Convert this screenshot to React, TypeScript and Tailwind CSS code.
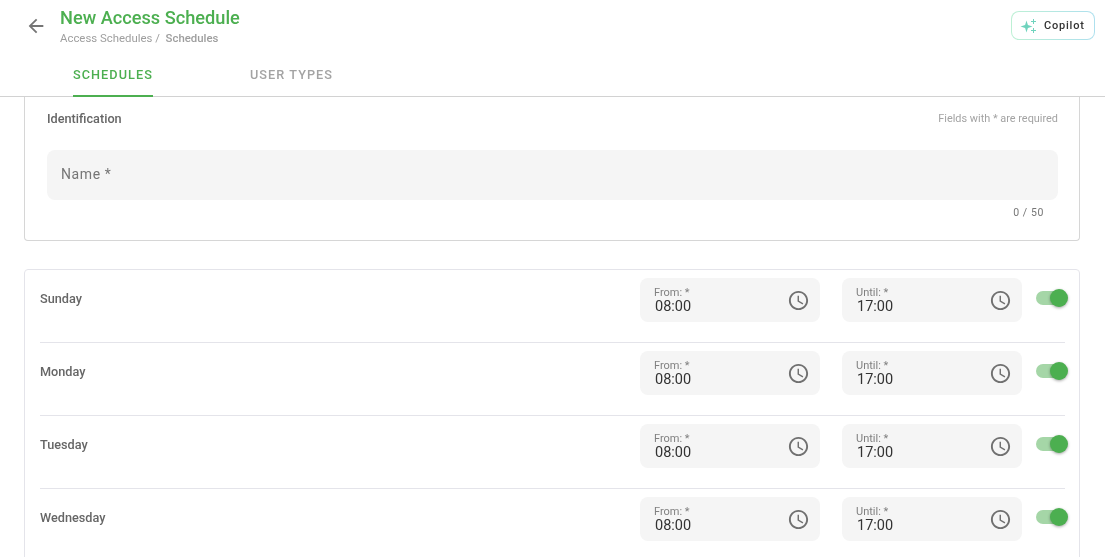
import React from 'react'
import { MdArrowBack, MdOutlineAccessTime } from 'react-icons/md'

const days = ['Sunday', 'Monday', 'Tuesday', 'Wednesday']

function TimeField({ label, value }: { label: string; value: string }) {
  return (
    <div className="flex h-[44px] w-[180px] items-center justify-between rounded-lg bg-[#f5f5f5] pl-[14px] pr-[10px]">
      <div className="flex flex-col pt-[1px]">
        <span className="text-[11px] leading-[12px] text-[#808080]">{label}</span>
        <span className="pl-[1px] text-[14.5px] leading-[16px] text-[#333333]">{value}</span>
      </div>
      <MdOutlineAccessTime className="mt-[1px] text-[#707070]" size={23} />
    </div>
  )
}

function Toggle() {
  return (
    <div className="relative ml-[14px] h-[18px] w-[32px]">
      <div className="absolute left-0 top-[2px] h-[14px] w-[28px] rounded-full bg-[#a5d6a7]" />
      <div className="absolute right-0 top-0 h-[18px] w-[18px] rounded-full bg-[#4caf50] shadow-[0_1px_3px_rgba(0,0,0,0.35)]" />
    </div>
  )
}

function DayRow({ day }: { day: string }) {
  return (
    <div className="flex h-[73px] border-b border-[#e4e4ea] pt-[8px]">
      <span className="mt-[13px] flex-1 text-[12.7px] leading-[16px] font-medium text-[#666666]">{day}</span>
      <TimeField label="From: *" value="08:00" />
      <div className="w-[22px]" />
      <TimeField label="Until: *" value="17:00" />
      <div className="mt-[11px] -mr-[3px]">
        <Toggle />
      </div>
    </div>
  )
}

export default function App() {
  return (
    <div className="h-[557px] w-[1105px] overflow-hidden font-['Roboto',sans-serif] [will-change:transform]">
      <header className="relative h-[97px] border-b border-[#d2d2d2]">
        <div className="flex pl-[25px] pt-[7px]">
          <MdArrowBack className="mt-[8px] text-[#757575]" size={22} />
          <div className="ml-[13px]">
            <h1 className="text-[18.2px] leading-[22px] font-medium text-[#4caf50]">New Access Schedule</h1>
            <p className="mt-[2px] text-[11.4px] leading-[14px] text-[#9e9e9e]">
              Access Schedules /&nbsp; <span className="font-medium">Schedules</span>
            </p>
          </div>
        </div>
        <div className="mt-[15px] flex pl-[73px]">
          <div className="h-[37px] w-[80px] border-b-2 border-[#4caf50] text-[12.7px] leading-[30px] font-medium tracking-[1.05px] text-[#4caf50]">
            SCHEDULES
          </div>
          <div className="ml-[97px] text-[12.7px] leading-[30px] font-medium tracking-[1.05px] text-[#a3a3a3]">USER TYPES</div>
        </div>
        {/* gradient border on the copilot button */}
        <div className="absolute left-[1011px] top-[11px] h-[29px] w-[84px] rounded-lg bg-gradient-to-r from-[#bdf0d4] to-[#aee0ee] p-[1px]">
          <div className="flex h-full items-center rounded-[7px] bg-white pl-[8px]">
            <svg width="16" height="16" viewBox="0 0 16 16">
              <path d="M6.5 2.5 7.9 7.1 12.5 8.5 7.9 9.9 6.5 14.5 5.1 9.9 .5 8.5 5.1 7.1Z" fill="#6fd3bd" />
              <path d="M13.5 1v5M11 3.5h5M13.5 10v5M11 12.5h5" stroke="#6fd3bd" strokeWidth="1" fill="none" />
            </svg>
            <span className="ml-[8px] text-[11px] leading-[14px] font-medium tracking-[0.8px] text-[#333333]">Copilot</span>
          </div>
        </div>
      </header>

      <main className="pl-[24px] pr-[25px]">
        <section className="h-[144px] rounded-b border border-t-0 border-[#d6d6d6] pl-[22px] pr-[21px] pt-[14px]">
          <div className="flex items-center justify-between">
            <span className="text-[12.7px] leading-[16px] font-medium text-[#666666]">Identification</span>
            <span className="text-[10.9px] leading-[16px] text-[#a3a3a3]">Fields with * are required</span>
          </div>
          <div className="mt-[23px] flex h-[50px] items-center rounded-lg bg-[#f5f5f5] px-[14px] pb-[2px] text-[14px] tracking-[0.6px] text-[#757575]">
            Name *
          </div>
          <div className="mt-[7px] pr-[14px] text-right text-[10.5px] leading-[12px] tracking-[0.6px] text-[#757575]">0 / 50</div>
        </section>

        <section className="mt-[28px] rounded border border-[#e4e4ea] pl-[15px] pr-[14px]">
          {days.map((day) => (
            <DayRow key={day} day={day} />
          ))}
        </section>
      </main>
    </div>
  )
}
